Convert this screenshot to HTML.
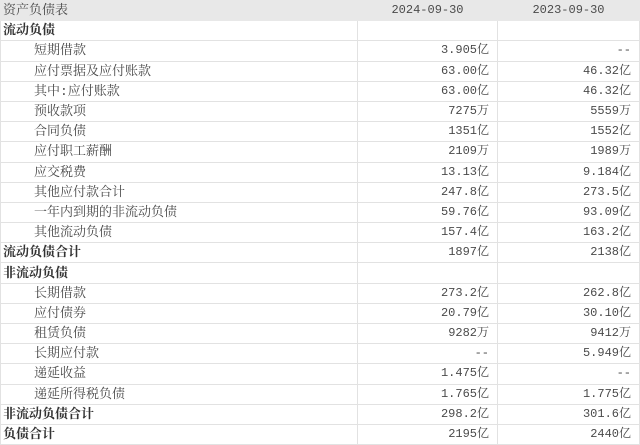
<!DOCTYPE html>
<html><head><meta charset="utf-8"><style>
html,body{margin:0;padding:0;background:#fff;}
table{border-collapse:collapse;width:639px;table-layout:fixed;font-family:"Liberation Mono","Noto Serif CJK SC",serif;font-size:12px;color:#4a4a4a;}
td{border:1px solid #e2e2e2;height:19.2px;padding:0 8px;white-space:nowrap;overflow:hidden;line-height:19px;}
td:nth-child(2),td:nth-child(3){text-align:right;}
td:first-child{font-size:13px;padding-left:2px;}
tr.h td{background:#e8e8e8;border-color:#e8e8e8;}
tr.h td:nth-child(2),tr.h td:nth-child(3){text-align:center;border-left-color:#fff;}
tr.s td:first-child{font-weight:bold;color:#333;}
td.i{padding-left:33px;}
</style></head><body>
<table>
<colgroup><col style="width:357px"><col style="width:140px"><col style="width:142px"></colgroup>
<tr class="h"><td>资产负债表</td><td>2024-09-30</td><td>2023-09-30</td></tr>
<tr class="s"><td>流动负债</td><td></td><td></td></tr>
<tr><td class="i">短期借款</td><td>3.905亿</td><td>--</td></tr>
<tr><td class="i">应付票据及应付账款</td><td>63.00亿</td><td>46.32亿</td></tr>
<tr><td class="i">其中:应付账款</td><td>63.00亿</td><td>46.32亿</td></tr>
<tr><td class="i">预收款项</td><td>7275万</td><td>5559万</td></tr>
<tr><td class="i">合同负债</td><td>1351亿</td><td>1552亿</td></tr>
<tr><td class="i">应付职工薪酬</td><td>2109万</td><td>1989万</td></tr>
<tr><td class="i">应交税费</td><td>13.13亿</td><td>9.184亿</td></tr>
<tr><td class="i">其他应付款合计</td><td>247.8亿</td><td>273.5亿</td></tr>
<tr><td class="i">一年内到期的非流动负债</td><td>59.76亿</td><td>93.09亿</td></tr>
<tr><td class="i">其他流动负债</td><td>157.4亿</td><td>163.2亿</td></tr>
<tr class="s"><td>流动负债合计</td><td>1897亿</td><td>2138亿</td></tr>
<tr class="s"><td>非流动负债</td><td></td><td></td></tr>
<tr><td class="i">长期借款</td><td>273.2亿</td><td>262.8亿</td></tr>
<tr><td class="i">应付债券</td><td>20.79亿</td><td>30.10亿</td></tr>
<tr><td class="i">租赁负债</td><td>9282万</td><td>9412万</td></tr>
<tr><td class="i">长期应付款</td><td>--</td><td>5.949亿</td></tr>
<tr><td class="i">递延收益</td><td>1.475亿</td><td>--</td></tr>
<tr><td class="i">递延所得税负债</td><td>1.765亿</td><td>1.775亿</td></tr>
<tr class="s"><td>非流动负债合计</td><td>298.2亿</td><td>301.6亿</td></tr>
<tr class="s"><td>负债合计</td><td>2195亿</td><td>2440亿</td></tr>
</table>
</body></html>
